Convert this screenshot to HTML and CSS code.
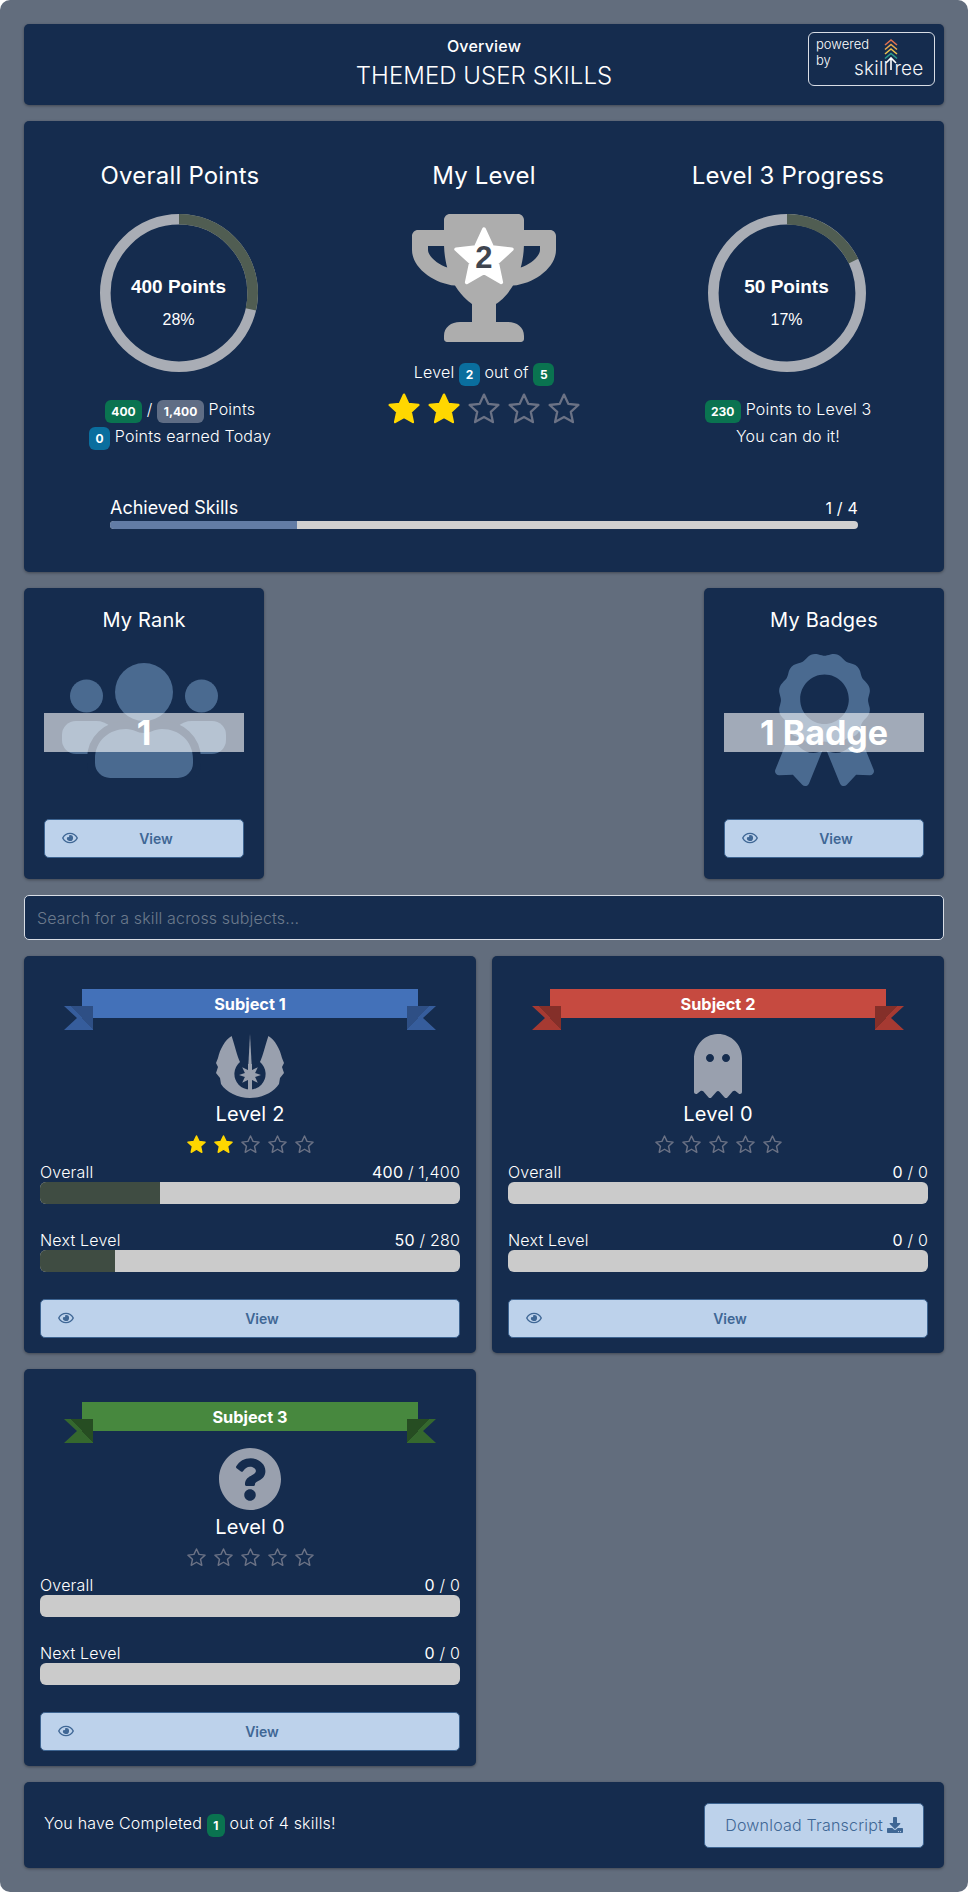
FILE: index.html
```html
<!DOCTYPE html>
<html lang="en">
<head>
    <meta charset="UTF-8">
    <meta name="viewport" content="width=device-width, initial-scale=1.0">
    <title>Themed User Skills</title>
    <link rel="stylesheet" href="styles.css">
</head>
<body>

<svg class="defs" width="0" height="0" aria-hidden="true">
    <symbol id="star" viewBox="0 0 24 24">
        <polygon points="12,1.2 15.2,8.1 22.8,9 17.1,14.2 18.7,21.8 12,18 5.3,21.8 6.9,14.2 1.2,9 8.8,8.1"/>
    </symbol>
    <symbol id="eye" viewBox="0 0 576 512">
        <path d="M288 144a110.94 110.94 0 0 0-31.24 5 55.4 55.4 0 0 1 7.24 27 56 56 0 0 1-56 56 55.4 55.4 0 0 1-27-7.24A111.71 111.71 0 1 0 288 144zm284.52 97.4C518.29 135.59 410.93 64 288 64S57.68 135.64 3.48 241.41a32.35 32.35 0 0 0 0 29.19C57.71 376.41 165.07 448 288 448s230.32-71.64 284.52-177.41a32.35 32.35 0 0 0 0-29.19zM288 400c-98.65 0-189.09-55-237.93-144C98.91 167 189.34 112 288 112s189.09 55 237.93 144C477.1 345 386.66 400 288 400z"/>
    </symbol>
</svg>

<div class="page">

    <header class="card top-bar">
        <div class="top-sub">Overview</div>
        <div class="top-title">THEMED USER SKILLS</div>
        <div class="powered">
            <span class="powered-text">powered<br>by</span>
            <span class="logo">
                <svg class="logo-tree" viewBox="0 0 16 32" width="16" height="32" fill="none" stroke-width="1.6">
                    <path d="M2 7 L8 2 L14 7" stroke="#e0714f"/>
                    <path d="M2 11.5 L8 6.5 L14 11.5" stroke="#e9a94e"/>
                    <path d="M2 16 L8 11 L14 16" stroke="#e9c04e"/>
                    <path d="M2 20.5 L8 15.5 L14 20.5" stroke="#2c9c8c"/>
                    <path d="M3 25 L8 20 L13 25 M8 20 V36" stroke="#fff"/>
                </svg>
                <span class="logo-word">skill<span class="logo-t">t</span>ree</span>
            </span>
        </div>
    </header>

    <section class="card summary">
        <div class="summary-cols">
            <div class="summary-col">
                <h2 class="summary-title">Overall Points</h2>
                <div class="ring">
                    <svg viewBox="0 0 158 158" width="158" height="158">
                        <circle class="ring-bg" cx="79" cy="79" r="73.7"/>
                        <circle class="ring-fill" cx="79" cy="79" r="73.7" pathLength="100" stroke-dasharray="28.57 100" transform="rotate(-90 79 79)"/>
                    </svg>
                    <div class="ring-text">
                        <div class="ring-points">400 Points</div>
                        <div class="ring-pct">28%</div>
                    </div>
                </div>
                <div class="summary-line first"><span class="badge green">400</span> / <span class="badge gray">1,400</span> Points</div>
                <div class="summary-line"><span class="badge blue">0</span> Points earned Today</div>
            </div>

            <div class="summary-col">
                <h2 class="summary-title">My Level</h2>
                <div class="trophy">
                    <svg viewBox="0 0 576 512" width="144" height="128" fill="#adadad">
                        <path d="M552 64H448V24c0-13.3-10.7-24-24-24H152c-13.3 0-24 10.7-24 24v40H24C10.7 64 0 74.7 0 88v56c0 35.7 22.5 72.4 61.9 100.7 31.5 22.7 69.8 37.1 110 41.7C203.3 338.5 240 360 240 360v72h-48c-35.3 0-64 20.7-64 56v12c0 6.6 5.4 12 12 12h296c6.6 0 12-5.4 12-12v-12c0-35.3-28.7-56-64-56h-48v-72s36.7-21.5 68.1-73.6c40.3-4.6 78.7-19 110-41.7 39.3-28.3 61.9-65 61.9-100.7V88c0-13.3-10.7-24-24-24zM99.3 192.8C74.9 175.2 64 155.6 64 144v-16h64.2c1 32.6 5.8 61.2 12.8 86.2-15.1-5.2-29.2-12.4-41.7-21.4zM512 144c0 16.1-17.7 36.1-35.3 48.8-12.5 9-26.7 16.2-41.8 21.4 7-25 11.8-53.6 12.8-86.2H512v16z"/>
                    </svg>
                    <svg class="trophy-star" viewBox="0 0 24 24" width="62" height="62"><use href="#star"/></svg>
                    <div class="trophy-num">2</div>
                </div>
                <div class="level-line">Level <span class="badge blue">2</span> out of <span class="badge green">5</span></div>
                <div class="stars big">
                    <svg class="on"><use href="#star"/></svg>
                    <svg class="on"><use href="#star"/></svg>
                    <svg><use href="#star"/></svg>
                    <svg><use href="#star"/></svg>
                    <svg><use href="#star"/></svg>
                </div>
            </div>

            <div class="summary-col">
                <h2 class="summary-title">Level 3 Progress</h2>
                <div class="ring">
                    <svg viewBox="0 0 158 158" width="158" height="158">
                        <circle class="ring-bg" cx="79" cy="79" r="73.7"/>
                        <circle class="ring-fill" cx="79" cy="79" r="73.7" pathLength="100" stroke-dasharray="17.86 100" transform="rotate(-90 79 79)"/>
                    </svg>
                    <div class="ring-text">
                        <div class="ring-points">50 Points</div>
                        <div class="ring-pct">17%</div>
                    </div>
                </div>
                <div class="summary-line first"><span class="badge green">230</span> Points to Level 3</div>
                <div class="summary-line">You can do it!</div>
            </div>
        </div>

        <div class="achieved">
            <div class="achieved-labels"><span class="achieved-name">Achieved Skills</span><span>1 / 4</span></div>
            <div class="achieved-bar"><div class="achieved-fill" style="width: 25%"></div></div>
        </div>
    </section>

    <div class="rank-row">
        <div class="card mini">
            <h3 class="mini-title">My Rank</h3>
            <div class="mini-icon">
                <svg viewBox="0 0 164 115" width="164" height="115" class="users">
                    <circle cx="24.5" cy="33" r="16.5"/>
                    <circle cx="139.5" cy="33" r="16.5"/>
                    <circle cx="82" cy="29" r="29"/>
                    <path d="M14 58H34C40 58 44 60 48 63L40 91H14A14 14 0 0 1 0 77V72A14 14 0 0 1 14 58Z"/>
                    <path d="M150 58H130C124 58 120 60 116 63L124 91H150A14 14 0 0 0 164 77V72A14 14 0 0 0 150 58Z"/>
                    <path class="users-front" d="M48 115a15 15 0 0 1-15-15v-4C33 78 47 66 64 66 72 66 75 70 82 70 89 70 92 66 100 66 117 66 131 78 131 96v4a15 15 0 0 1-15 15Z"/>
                </svg>
                <div class="mini-label">1</div>
            </div>
            <a class="btn"><svg class="btn-eye"><use href="#eye"/></svg><span>View</span></a>
        </div>

        <div class="card mini">
            <h3 class="mini-title">My Badges</h3>
            <div class="mini-icon">
                <svg viewBox="0 0 384 512" width="99" height="132" class="award">
                    <path d="M97.12 362.63c-8.69-8.69-4.16-6.24-25.12-11.85-9.51-2.55-17.87-7.45-25.43-13.32L1.2 448.7c-4.39 10.77 3.81 22.47 15.43 22.03l52.69-2.01L105.56 507c8 8.44 22.04 5.81 26.43-4.96l52.05-127.62c-10.84 6.04-22.87 9.58-35.31 9.58-19.5 0-37.82-7.59-51.61-21.37zM382.8 448.7l-45.37-111.24c-7.56 5.88-15.92 10.77-25.43 13.32-21.07 5.64-16.45 3.18-25.12 11.85-13.79 13.78-32.12 21.37-51.62 21.37-12.44 0-24.47-3.55-35.31-9.58L252 502.04c4.39 10.77 18.44 13.4 26.43 4.96l36.25-38.28 52.69 2.01c11.62.44 19.82-11.27 15.43-22.03zM263 340c15.28-15.55 17.03-14.21 38.79-20.14 13.89-3.79 24.75-14.84 28.47-28.98 7.48-28.4 5.54-24.97 25.95-45.75 10.17-10.35 14.14-25.44 10.42-39.58-7.47-28.38-7.48-24.42 0-52.83 3.72-14.14-.25-29.23-10.42-39.58-20.41-20.78-18.47-17.36-25.95-45.75-3.72-14.14-14.58-25.19-28.47-28.98-27.88-7.61-24.52-5.62-44.95-26.41-10.17-10.35-25-14.4-38.89-10.61-27.87 7.6-23.98 7.61-51.9 0-13.89-3.79-28.72.25-38.89 10.61-20.41 20.78-17.05 18.8-44.94 26.41-13.89 3.79-24.75 14.84-28.47 28.98-7.47 28.39-5.54 24.97-25.95 45.75-10.17 10.35-14.15 25.44-10.42 39.58 7.47 28.36 7.48 24.4 0 52.82-3.72 14.14.25 29.23 10.42 39.59 20.41 20.78 18.47 17.35 25.95 45.75 3.72 14.14 14.58 25.19 28.47 28.98C104.6 325.96 106.27 325 121 340c13.23 13.47 33.84 15.88 49.74 5.82a39.676 39.676 0 0 1 42.53 0c15.89 10.06 36.5 7.65 49.73-5.82zM97.66 175.96c0-53.03 42.24-96.02 94.34-96.02s94.34 42.99 94.34 96.02-42.24 96.02-94.34 96.02-94.34-42.99-94.34-96.02z"/>
                </svg>
                <div class="mini-label">1 Badge</div>
            </div>
            <a class="btn"><svg class="btn-eye"><use href="#eye"/></svg><span>View</span></a>
        </div>
    </div>

    <input class="search" type="text" placeholder="Search for a skill across subjects...">

    <div class="subjects">
        <div class="card subject">
            <div class="ribbon blue-ribbon">Subject 1</div>
            <svg class="subject-icon" viewBox="0 0 68 64" width="68" height="64">
                <path d="M15.6 2C9 6 4 15 2 24L0 29 2 33 0 39 4 44 5 50C10 58 22 64 34 64S58 58 63 50L64 44 68 39 66 33 68 29 66 24C64 15 59 6 52.4 2 49 12 47 22 44 28A15.6 15.6 0 1 1 24 28C21 22 19 12 15.6 2Z"/>
                <path d="M34 0 35.6 30H32.4Z"/>
                <rect x="32" y="30" width="4" height="27"/>
                <polygon points="45,41 39.1,43.1 41.8,48.8 36.1,46.1 34,52 31.9,46.1 26.2,48.8 28.9,43.1 23,41 28.9,38.9 26.2,33.2 31.9,35.9 34,30 36.1,35.9 41.8,33.2 39.1,38.9"/>
            </svg>
            <div class="subject-level">Level 2</div>
            <div class="stars small">
                <svg class="on"><use href="#star"/></svg>
                <svg class="on"><use href="#star"/></svg>
                <svg><use href="#star"/></svg>
                <svg><use href="#star"/></svg>
                <svg><use href="#star"/></svg>
            </div>
            <div class="bar-labels"><span>Overall</span><span><b>400</b> / 1,400</span></div>
            <div class="bar"><div class="bar-fill" style="width: 28.57%"></div></div>
            <div class="bar-labels next"><span>Next Level</span><span><b>50</b> / 280</span></div>
            <div class="bar"><div class="bar-fill" style="width: 17.86%"></div></div>
            <a class="btn"><svg class="btn-eye"><use href="#eye"/></svg><span>View</span></a>
        </div>

        <div class="card subject">
            <div class="ribbon red-ribbon">Subject 2</div>
            <svg class="subject-icon" viewBox="0 0 384 512" width="48" height="64">
                <path d="M186.1.09C81.01 3.24 0 94.92 0 200.05v263.92c0 14.26 17.23 21.39 27.31 11.31l24.92-18.53c6.66-4.95 16-3.99 21.51 2.21l42.95 48.35c6.25 6.25 16.38 6.25 22.63 0l40.72-45.85c6.37-7.17 17.56-7.17 23.92 0l40.72 45.85c6.25 6.25 16.38 6.25 22.63 0l42.95-48.35c5.51-6.2 14.85-7.16 21.51-2.21l24.92 18.53c10.08 10.08 27.31 2.94 27.31-11.31V192C384 84 294.83-3.17 186.1.09zM128 224c-17.67 0-32-14.33-32-32s14.33-32 32-32 32 14.33 32 32-14.33 32-32 32zm128 0c-17.67 0-32-14.33-32-32s14.33-32 32-32 32 14.33 32 32-14.33 32-32 32z"/>
            </svg>
            <div class="subject-level">Level 0</div>
            <div class="stars small">
                <svg><use href="#star"/></svg>
                <svg><use href="#star"/></svg>
                <svg><use href="#star"/></svg>
                <svg><use href="#star"/></svg>
                <svg><use href="#star"/></svg>
            </div>
            <div class="bar-labels"><span>Overall</span><span><b>0</b> / 0</span></div>
            <div class="bar"></div>
            <div class="bar-labels next"><span>Next Level</span><span><b>0</b> / 0</span></div>
            <div class="bar"></div>
            <a class="btn"><svg class="btn-eye"><use href="#eye"/></svg><span>View</span></a>
        </div>

        <div class="card subject">
            <div class="ribbon green-ribbon">Subject 3</div>
            <svg class="subject-icon" viewBox="0 0 512 512" width="64" height="64">
                <path d="M504 256c0 136.997-111.043 248-248 248S8 392.997 8 256C8 119.083 119.043 8 256 8s248 111.083 248 248zM262.655 90c-54.497 0-89.255 22.957-116.549 63.758-3.536 5.286-2.353 12.415 2.715 16.258l34.699 26.31c5.205 3.947 12.621 3.008 16.665-2.122 17.864-22.658 30.113-35.797 57.303-35.797 20.429 0 45.698 13.148 45.698 32.958 0 14.976-12.363 22.667-32.534 33.976C247.128 238.528 216 254.941 216 296v4c0 6.627 5.373 12 12 12h56c6.627 0 12-5.373 12-12v-1.333c0-28.462 83.186-29.647 83.186-106.667 0-58.002-60.165-102-116.531-102zM256 338c-25.365 0-46 20.635-46 46 0 25.364 20.635 46 46 46s46-20.636 46-46c0-25.365-20.635-46-46-46z"/>
            </svg>
            <div class="subject-level">Level 0</div>
            <div class="stars small">
                <svg><use href="#star"/></svg>
                <svg><use href="#star"/></svg>
                <svg><use href="#star"/></svg>
                <svg><use href="#star"/></svg>
                <svg><use href="#star"/></svg>
            </div>
            <div class="bar-labels"><span>Overall</span><span><b>0</b> / 0</span></div>
            <div class="bar"></div>
            <div class="bar-labels next"><span>Next Level</span><span><b>0</b> / 0</span></div>
            <div class="bar"></div>
            <a class="btn"><svg class="btn-eye"><use href="#eye"/></svg><span>View</span></a>
        </div>
    </div>

    <footer class="card bottom-bar">
        <div>You have Completed <span class="badge green">1</span> out of 4 skills!</div>
        <a class="download">Download Transcript
            <svg viewBox="0 0 512 512" width="16" height="16" fill="#3f6795">
                <path d="M216 0h80c13.3 0 24 10.7 24 24v168h87.7c17.8 0 26.7 21.5 14.1 34.1L269.7 378.3c-7.5 7.5-19.8 7.5-27.3 0L90.1 226.1c-12.6-12.6-3.7-34.1 14.1-34.1H192V24c0-13.3 10.7-24 24-24zm296 376v112c0 13.3-10.7 24-24 24H24c-13.3 0-24-10.7-24-24V376c0-13.3 10.7-24 24-24h146.7l49 49c20.1 20.1 52.5 20.1 72.6 0l49-49H488c13.3 0 24 10.7 24 24zm-124 88c0-11-9-20-20-20s-20 9-20 20 9 20 20 20 20-9 20-20zm64 0c0-11-9-20-20-20s-20 9-20 20 9 20 20 20 20-9 20-20z"/>
            </svg>
        </a>
    </footer>

</div>

</body>
</html>
```

FILE: styles.css
```css
* {
    box-sizing: border-box;
}

body {
    margin: 0;
    background-color: #fff;
    font-family: Inter, 'Liberation Sans', sans-serif;
    font-weight: 300;
    font-size: 16px;
    letter-spacing: 0.2px;
    color: #fff;
}

.defs {
    position: absolute;
}

.page {
    height: 1892px;
    padding: 24px;
    background-color: #626d7d;
    border-radius: 10px;
    display: flex;
    flex-direction: column;
    gap: 16px;
}

.card {
    background-color: #152c4e;
    border-radius: 5px;
    box-shadow: 0 1px 3px rgba(0, 0, 0, 0.35);
}

/* top bar */
.top-bar {
    position: relative;
    flex: none;
    height: 81px;
    text-align: center;
    padding-top: 12px;
}

.top-sub {
    font-size: 16px;
    font-weight: 500;
    line-height: 20px;
}

.top-title {
    font-size: 24px;
    letter-spacing: 0.05px;
    line-height: 32px;
    margin-top: 4px;
}

.powered {
    position: absolute;
    top: 8px;
    right: 9px;
    width: 127px;
    height: 54px;
    border: 1px solid #d8dde5;
    border-radius: 6px;
    text-align: left;
    padding: 4px 7px;
    font-size: 13px;
    letter-spacing: 0;
    line-height: 15.5px;
}

.logo {
    position: absolute;
    right: 10px;
    top: 5px;
    width: 70px;
    height: 42px;
}

.logo-tree {
    position: absolute;
    left: 29px;
    top: 0;
}

.logo-word {
    position: absolute;
    left: 0;
    bottom: 0;
    font-size: 19px;
    line-height: 22px;
    font-weight: 300;
    letter-spacing: 0.2px;
    color: #f4f5f8;
}

.logo-t {
    visibility: hidden;
}

/* summary */
.summary {
    flex: none;
    height: 451px;
    padding: 37px 4px 0;
}

.summary-cols {
    display: grid;
    grid-template-columns: repeat(3, 1fr);
}

.summary-col {
    display: flex;
    flex-direction: column;
    align-items: center;
}

.summary-title {
    margin: 0;
    font-size: 24px;
    font-weight: 400;
    line-height: 36px;
}

.ring {
    position: relative;
    width: 158px;
    height: 158px;
    margin: 20px 3px 0 0;
}

.ring svg {
    display: block;
}

.ring-bg,
.ring-fill {
    fill: none;
    stroke-width: 10.6;
}

.ring-bg {
    stroke: #a9adb5;
}

.ring-fill {
    stroke: #505d52;
}

.ring-text {
    position: absolute;
    inset: 0;
    text-align: center;
    font-family: 'Liberation Sans', sans-serif;
    letter-spacing: 0;
}

.ring-points {
    font-size: 19px;
    font-weight: 700;
    line-height: 22px;
    margin-top: 62px;
}

.ring-pct {
    font-size: 16px;
    font-weight: 400;
    line-height: 20px;
    margin-top: 12px;
}

.summary-line {
    font-size: 16px;
    line-height: 27px;
}

.summary-line.first {
    margin-top: 24px;
}

.badge {
    display: inline-block;
    padding: 0 6.5px;
    font-size: 12px;
    font-weight: 700;
    letter-spacing: 0;
    line-height: 23px;
    height: 23px;
    border-radius: 6px;
    vertical-align: -1px;
    text-align: center;
}

.green {
    background-color: #0a7350;
}

.gray {
    background-color: #5f6d85;
}

.blue {
    background-color: #0a6e9e;
}

/* my level */
.trophy {
    position: relative;
    width: 144px;
    height: 128px;
    margin-top: 20px;
}

.trophy svg {
    display: block;
}

.trophy-star {
    position: absolute;
    left: 41px;
    top: 12px;
    fill: #fff;
    stroke: #fff;
    stroke-width: 1.4;
    stroke-linejoin: round;
}

.trophy-num {
    position: absolute;
    left: 0;
    right: 0;
    top: 24px;
    text-align: center;
    font-family: 'Liberation Sans', sans-serif;
    font-weight: 700;
    font-size: 31px;
    line-height: 40px;
    color: #40454f;
}

.level-line {
    font-size: 16px;
    line-height: 27px;
    margin-top: 17px;
}

.stars {
    display: flex;
}

.stars svg {
    fill: none;
    stroke: #6b7285;
    stroke-linejoin: round;
    display: block;
}

.stars svg.on {
    fill: #ffd700;
    stroke: #ffd700;
}

.stars.big {
    gap: 8px;
    margin-top: 7px;
}

.stars.big svg {
    width: 32px;
    height: 32px;
    stroke-width: 1.7;
}

.stars.small {
    gap: 8px;
    margin-top: 7px;
}

.stars.small svg {
    width: 19px;
    height: 19px;
    stroke-width: 1.8;
}

/* achieved skills bar */
.achieved {
    margin: 45px 82px 0;
}

.achieved-labels {
    display: flex;
    justify-content: space-between;
    align-items: center;
    font-size: 16px;
    font-weight: 400;
    line-height: 26px;
}

.achieved-name {
    font-size: 18px;
    letter-spacing: 0;
}

.achieved-bar {
    height: 8px;
    background-color: #d0d0d0;
    border-radius: 4px;
    overflow: hidden;
}

.achieved-fill {
    height: 100%;
    background-color: #627ca5;
}

/* rank and badges */
.rank-row {
    flex: none;
    display: flex;
    justify-content: space-between;
}

.mini {
    width: 240px;
    height: 291px;
    padding: 18px 20px 0;
}

.mini-title {
    margin: 0;
    text-align: center;
    font-size: 20px;
    font-weight: 400;
    line-height: 28px;
}

.mini-icon {
    position: relative;
    height: 146px;
    margin: 13px 0 26px;
    display: flex;
    justify-content: center;
    align-items: center;
}

.users,
.award {
    fill: #4a6a90;
}

.users-front {
    stroke: #152c4e;
    stroke-width: 16;
    paint-order: stroke;
}

.mini-label {
    position: absolute;
    left: 0;
    right: 0;
    top: 66px;
    height: 39px;
    text-align: center;
    background-color: rgba(255, 255, 255, 0.6);
    font-size: 34px;
    font-weight: 700;
    letter-spacing: 0;
    line-height: 39px;
}

.btn {
    display: block;
    position: relative;
    height: 39px;
    background-color: #bdd2eb;
    border: 1px solid #3d6491;
    border-radius: 5px;
    color: #3f6795;
    font-size: 14px;
    font-weight: 600;
    letter-spacing: 0;
    line-height: 37px;
    text-align: center;
}

.btn span {
    padding-left: 24px;
}

.btn-eye {
    position: absolute;
    left: 17px;
    top: 11px;
    width: 16px;
    height: 14px;
    fill: #3f6795;
}

/* search */
.search {
    display: block;
    flex: none;
    width: 100%;
    height: 45px;
    padding: 0 12px;
    background-color: #152c4e;
    border: 1px solid #d8dde5;
    border-radius: 5px;
    font-family: inherit;
    font-weight: 300;
    font-size: 16px;
    letter-spacing: 0.15px;
    color: #fff;
    outline: none;
}

.search::placeholder {
    color: #6c7a8c;
    opacity: 1;
}

/* subjects */
.subjects {
    flex: none;
    display: grid;
    grid-template-columns: 1fr 1fr;
    gap: 16px;
}

.subject {
    height: 397px;
    padding: 33px 16px 0;
    text-align: center;
}

.ribbon {
    position: relative;
    isolation: isolate;
    margin: 0 42px;
    height: 29px;
    font-size: 16.3px;
    font-weight: 700;
    letter-spacing: 0;
    line-height: 30px;
}

/* tails sit behind the band, the dark corner is the fold */
.ribbon::before,
.ribbon::after {
    content: "";
    position: absolute;
    top: 17px;
    width: 29px;
    height: 24px;
    z-index: -1;
}

.ribbon::before {
    left: -18px;
    clip-path: polygon(0 0, 100% 0, 100% 100%, 0 100%, 13px 50%);
}

.ribbon::after {
    right: -18px;
    clip-path: polygon(0 0, 100% 0, calc(100% - 13px) 50%, 100% 100%, 0 100%);
}

.blue-ribbon {
    background-color: #4371b9;
}

.blue-ribbon::before {
    background: linear-gradient(47.5deg, #365d9c 56.9%, #2e4f85 56.9%);
}

.blue-ribbon::after {
    background: linear-gradient(-47.5deg, #365d9c 56.9%, #2e4f85 56.9%);
}

.red-ribbon {
    background-color: #c64a40;
}

.red-ribbon::before {
    background: linear-gradient(47.5deg, #a63a32 56.9%, #842f29 56.9%);
}

.red-ribbon::after {
    background: linear-gradient(-47.5deg, #a63a32 56.9%, #842f29 56.9%);
}

.green-ribbon {
    background-color: #47883e;
}

.green-ribbon::before {
    background: linear-gradient(47.5deg, #35682e 56.9%, #264d22 56.9%);
}

.green-ribbon::after {
    background: linear-gradient(-47.5deg, #35682e 56.9%, #264d22 56.9%);
}

.subject-icon {
    display: block;
    margin: 16px auto 0;
    fill: #99a0ae;
}

.subject-level {
    font-size: 20px;
    font-weight: 400;
    line-height: 28px;
    margin-top: 2px;
}

.subject .stars {
    justify-content: center;
}

.bar-labels {
    display: flex;
    justify-content: space-between;
    font-size: 16px;
    line-height: 20px;
    margin-top: 8px;
}

.bar-labels b {
    font-weight: 400;
}

.bar-labels.next {
    margin-top: 26px;
}

.bar {
    height: 22px;
    background-color: #cbcbcb;
    border-radius: 6px;
    overflow: hidden;
}

.bar-fill {
    height: 100%;
    background-color: #3f4c42;
}

.subject .btn {
    margin-top: 27px;
}

/* footer */
.bottom-bar {
    flex: none;
    height: 86px;
    padding: 0 20px;
    display: flex;
    justify-content: space-between;
    align-items: center;
    font-size: 16px;
}

.download {
    display: flex;
    align-items: center;
    gap: 4px;
    height: 45px;
    padding: 0 20px;
    background-color: #bdd2eb;
    border: 1px solid #3d6491;
    border-radius: 5px;
    color: #3f6795;
    font-size: 16px;
}
```
